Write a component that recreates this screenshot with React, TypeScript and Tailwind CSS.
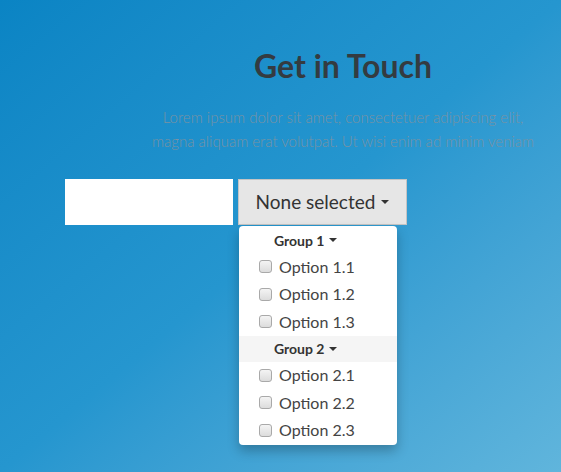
import React from "react";

const groups = [
    { label: "Group 1", options: ["Option 1.1", "Option 1.2", "Option 1.3"], active: false },
    { label: "Group 2", options: ["Option 2.1", "Option 2.2", "Option 2.3"], active: true },
];

function Caret({ gap = "ml-[4px]" }: { gap?: string }) {
    return (
        <span className={gap + " inline-block h-0 w-0 border-x-[4px] border-t-[4px] border-x-transparent border-t-[#333]"} />
    );
}

function Checkbox() {
    return (
        <span className="inline-block h-[13px] w-[13px] rounded-[3px] border border-[#a9a9a9] bg-gradient-to-b from-[#f4f4f4] to-[#dcdcdc]" />
    );
}

export default function App() {
    return (
        <div
            className="h-[472px] w-[561px] overflow-hidden bg-gradient-to-br from-[#0a84c4] via-[#2596cf] to-[#60b5dc]"
            style={{ fontFamily: "Lato, 'Open Sans', sans-serif" }}
        >
            <div className="ml-[143px] w-[400px] pt-[46px] text-center">
                <h2 className="text-[32px] font-bold leading-[40px] text-[#343b41]">Get in Touch</h2>
                <p className="mt-[19px] text-[15px] font-light leading-[24px] text-[#7b92a3]">
                    Lorem ipsum dolor sit amet, consectetuer adipiscing elit,
                    <br />
                    magna aliquam erat volutpat. Ut wisi enim ad minim veniam
                </p>
            </div>

            <div className="ml-[65px] mt-[26px] flex gap-[5px]">
                <div className="h-[46px] w-[168px] bg-white" />
                <div className="relative">
                    <button className="flex h-[46px] w-[169px] items-center justify-center border border-[#c4c4c4] bg-[#e6e6e6] text-[19px] text-[#333]">
                        None selected
                        <Caret gap="ml-[6px]" />
                    </button>
                    <div className="absolute left-[1px] top-[47px] w-[158px] rounded-[4px] bg-white py-[1px] shadow-[0_6px_12px_rgba(0,0,0,0.25)]">
                        {groups.map((g) => (
                            <div key={g.label}>
                                <div
                                    className={
                                        "flex h-[26px] items-center pl-[35px] text-[14px] font-bold text-[#333] " +
                                        (g.active ? "bg-[#f5f5f5]" : "")
                                    }
                                >
                                    {g.label}
                                    <Caret />
                                </div>
                                {g.options.map((o) => (
                                    <div key={o} className="flex h-[27.5px] items-center pl-[20px] text-[16px] font-normal text-[#444]">
                                        <Checkbox />
                                        <span className="ml-[7px]">{o}</span>
                                    </div>
                                ))}
                            </div>
                        ))}
                    </div>
                </div>
            </div>
        </div>
    );
}
